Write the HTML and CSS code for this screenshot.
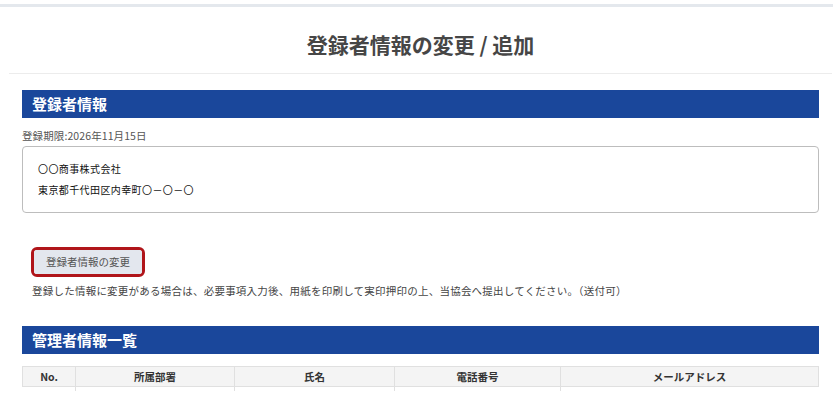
FILE: index.html
```html
<!DOCTYPE html>
<html lang="ja">
<head>
<meta charset="utf-8">
<title>登録者情報の変更 / 追加</title>
<link rel="stylesheet" href="styles.css">
</head>
<body>
<div class="topbar"></div>
<header class="page-head">
  <h1 class="page-title">登録者情報の変更 / 追加</h1>
</header>
<main class="content">
  <section class="section">
    <h2 class="section-bar">登録者情報</h2>
    <p class="expiry">登録期限:2026年11月15日</p>
    <div class="info-box">
      <p class="info-line">〇〇商事株式会社</p>
      <p class="info-line">東京都千代田区内幸町〇－〇－〇</p>
    </div>
    <div class="action">
      <span class="btn-ring"><button class="btn" type="button">登録者情報の変更</button></span>
    </div>
    <p class="note">登録した情報に変更がある場合は、必要事項入力後、用紙を印刷して実印押印の上、当協会へ提出してください。（送付可）</p>
  </section>
  <section class="section admins">
    <h2 class="section-bar">管理者情報一覧</h2>
    <table class="admin-table">
      <colgroup>
        <col class="c-no"><col class="c-dept"><col class="c-name"><col class="c-tel"><col class="c-mail">
      </colgroup>
      <thead>
        <tr><th>No.</th><th>所属部署</th><th>氏名</th><th>電話番号</th><th>メールアドレス</th></tr>
      </thead>
      <tbody>
        <tr class="stub"><td></td><td></td><td></td><td></td><td></td></tr>
      </tbody>
    </table>
  </section>
</main>
</body>
</html>
```

FILE: styles.css
```css
html, body {
  margin: 0;
  padding: 0;
  background: #fff;
}
body {
  font-family: "Noto Sans CJK JP", "Noto Sans", sans-serif;
  color: #444;
  font-size: 10.5px;
}
p, h1, h2 {
  margin: 0;
}
.topbar {
  margin-top: 4px;
  height: 3px;
  background: #e4e8ed;
  margin-right: 3px;
}
.page-head {
  margin: 0 4px 0 9px;
  height: 66px;
  border-bottom: 1px solid #ececec;
  display: flex;
  align-items: center;
  justify-content: center;
}
.page-title {
  font-size: 21px;
  font-weight: 700;
  color: #464646;
  line-height: 28px;
  padding-top: 8px;
}
.content {
  padding: 16px 17px 0 22px;
}
.section-bar {
  height: 28px;
  background: #1a479b;
  color: #fff;
  font-size: 15px;
  font-weight: 700;
  line-height: 28px;
  padding-left: 10px;
}
.expiry {
  margin-top: 10px;
  line-height: 16px;
  color: #555;
  letter-spacing: 0.1px;
}
.info-box {
  margin-top: 2px;
  height: 67px;
  box-sizing: border-box;
  border: 1px solid #bdbdbd;
  border-radius: 4px;
  padding: 11px 0 0 15px;
  color: #111;
}
.info-line {
  font-size: 10px;
  line-height: 21px;
  letter-spacing: 0.4px;
}
.action {
  margin-top: 34px;
  padding-left: 9px;
  display: flex;
}
.btn-ring {
  display: inline-flex;
  border: 3px solid #b0151a;
  border-radius: 6px;
}
.btn {
  font-family: "Noto Sans CJK JP", "Noto Sans", sans-serif;
  font-size: 10.5px;
  color: #555;
  background: #e3e7ee;
  border: 0;
  border-radius: 3px;
  width: 108px;
  height: 24px;
  padding: 0;
  line-height: 24px;
}
.note {
  margin-top: 6px;
  padding-left: 10px;
  line-height: 16px;
  color: #444;
  letter-spacing: 0.23px;
}
.admins {
  margin-top: 27px;
}
.admin-table {
  margin-top: 12px;
  width: 100%;
  border-collapse: collapse;
  table-layout: fixed;
}
.c-no { width: 53px; }
.c-dept { width: 159px; }
.c-name { width: 160px; }
.c-tel { width: 166px; }
.admin-table th {
  background: #f4f4f4;
  border: 1px solid #e0e0e0;
  height: 19px;
  padding: 0;
  font-size: 10.5px;
  font-weight: 700;
  color: #333;
  line-height: 18px;
}
.admin-table td {
  height: 4px;
  padding: 0;
  border-left: 1px solid #e0e0e0;
  border-right: 1px solid #e0e0e0;
}
.stub td:first-child {
  border-left: 0;
}
.stub td:last-child {
  border-right: 0;
}
```
